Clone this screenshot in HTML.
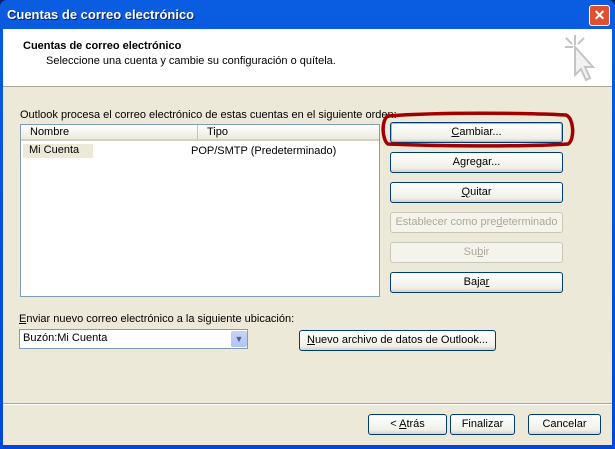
<!DOCTYPE html>
<html><head><style>
*{margin:0;padding:0;box-sizing:border-box}
body{width:615px;height:449px;overflow:hidden;font-family:"Liberation Sans",sans-serif;font-size:11px;color:#000;background:#0a246a}
.win{position:absolute;left:0;top:0;width:615px;height:449px;background:linear-gradient(#0a5ce0,#0047d6);border-radius:7px 7px 0 0}
.title{position:absolute;left:7px;top:7px;color:#fff;font-weight:bold;font-size:13px;text-shadow:1px 1px #0a1e6a}
.close{position:absolute;left:589px;top:5px;width:21px;height:21px;background:#e0502e;border:1px solid #fff;border-radius:3px;color:#fff;font-weight:bold;text-align:center;line-height:19px;font-size:14px}
.client{position:absolute;left:3px;top:29px;width:609px;height:416px;background:#ece9d8}
.head{position:absolute;left:0;top:0;width:609px;height:58px;background:#fff;border-bottom:1px solid #aca899}
.a{position:absolute;white-space:nowrap}
.btn{position:absolute;height:21px;border:1px solid #003c74;border-radius:3px;background:linear-gradient(#fff,#f0efe8 80%,#d6d0c5);text-align:center;line-height:19px}
.dis{border-color:#c9c7ba;color:#aca899;background:#f5f4ea}
u{text-decoration:underline}
</style></head><body>
<div class="win">
<div class="title">Cuentas de correo electrónico</div>
<div class="close">✕</div>
<div class="client">
<div class="head">
<div class="a" style="left:20px;top:11px;font-weight:bold">Cuentas de correo electrónico</div>
<div class="a" style="left:43px;top:26px">Seleccione una cuenta y cambie su configuración o quítela.</div>
<svg class="a" style="left:560px;top:4px" width="36" height="52"><g stroke="#c4c4c4" stroke-width="2" fill="none"><path d="M12 2v10M3 5l6 6M21 5l-6 6M2 14h8"/><path d="M12 14l0 28 6-6 5 11 4-2-5-11 8 0z" fill="#f2f2f2"/></g></svg>
</div>
<div class="a" style="left:17px;top:80px">Outlook procesa el correo electrónico de estas cuentas en el siguiente orden:</div>
<div class="a" style="left:17px;top:95px;width:360px;height:173px;background:#fff;border:1px solid #7f9db9">
<div style="height:16px;background:linear-gradient(#fff,#ebeadb);border-bottom:2px solid #d6d2c2;position:relative">
<span class="a" style="left:9px;top:1px">Nombre</span>
<span class="a" style="left:176px;top:0;height:14px;border-left:1px solid #c7c5b2"></span>
<span class="a" style="left:186px;top:1px">Tipo</span></div>
<div class="a" style="left:2px;top:19px;width:70px;height:14px;background:#ece9d8;padding-left:6px">Mi Cuenta</div>
<div class="a" style="left:170px;top:20px">POP/SMTP (Predeterminado)</div>
</div>
<div class="btn" style="left:387px;top:93px;width:173px;border-color:#003c74;box-shadow:inset 0 0 0 1px #9cb9f0"><u>C</u>ambiar...</div>
<div class="btn" style="left:387px;top:123px;width:173px">A<u>g</u>regar...</div>
<div class="btn" style="left:387px;top:153px;width:173px"><u>Q</u>uitar</div>
<div class="btn dis" style="left:387px;top:183px;width:173px">Establecer como pre<u>d</u>eterminado</div>
<div class="btn dis" style="left:387px;top:213px;width:173px">Su<u>b</u>ir</div>
<div class="btn" style="left:387px;top:243px;width:173px">Baja<u>r</u></div>
<svg class="a" style="left:375px;top:81px" width="200" height="40"><path d="M10 6 C60 2 150 3 188 5 C196 8 197 30 190 34 C140 37 60 36 10 34 C4 30 3 10 10 6z" fill="none" stroke="#a00000" stroke-width="3.5"/></svg>
<div class="a" style="left:16px;top:284px"><u>E</u>nviar nuevo correo electrónico a la siguiente ubicación:</div>
<div class="a" style="left:16px;top:300px;width:229px;height:20px;background:#fff;border:1px solid #7f9db9;padding:2px 0 0 3px">Buzón:Mi Cuenta
<div class="a" style="left:211px;top:1px;width:16px;height:16px;background:linear-gradient(#c6d3f7,#b1c4f5);border-radius:2px;color:#4d6185;text-align:center;line-height:16px;font-size:9px">▼</div></div>
<div class="btn" style="left:296px;top:301px;width:197px"><u>N</u>uevo archivo de datos de Outlook...</div>
<div class="a" style="left:0;top:374px;width:609px;border-top:1px solid #aca899;border-bottom:1px solid #fff"></div>
<div class="btn" style="left:365px;top:385px;width:79px">&lt; <u>A</u>trás</div>
<div class="btn" style="left:447px;top:385px;width:65px">Finalizar</div>
<div class="btn" style="left:525px;top:385px;width:73px">Cancelar</div>
</div>
</div>
</body></html>
